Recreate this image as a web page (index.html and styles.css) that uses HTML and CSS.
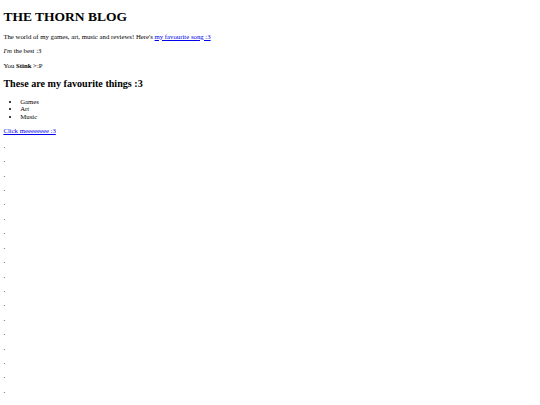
FILE: index.html
```html
<!DOCTYPE html>
<html>
<head>
<meta charset="utf-8">
<title>THE THORN BLOG</title>
<link rel="stylesheet" href="styles.css">
</head>
<body>
<h1>THE THORN BLOG</h1>
<p>The world of my games, art, music and reviews! Here's <a href="#">my favourite song :3</a></p>
<p><em>I'm</em> the best :3</p>
<p>You <strong>Stink</strong> &gt;:P</p>
<h2>These are my favourite things :3</h2>
<ul>
<li>Games</li>
<li>Art</li>
<li>Music</li>
</ul>
<p><a href="#">Click meeeeeeee :3</a></p>
<p>.</p>
<p>.</p>
<p>.</p>
<p>.</p>
<p>.</p>
<p>.</p>
<p>.</p>
<p>.</p>
<p>.</p>
<p>.</p>
<p>.</p>
<p>.</p>
<p>.</p>
<p>.</p>
<p>.</p>
<p>.</p>
<p>.</p>
<p>.</p>
<p>.</p>
<p>.</p>
</body>
</html>
```

FILE: styles.css
```css
html {
  font-size: 6.75px;
}
body {
  margin: 3.375px;
  font-family: "Liberation Serif", "Times New Roman", serif;
  font-size: 6.75px;
  line-height: 7.66px;
  color: #000;
  background: #fff;
}
h1 {
  font-size: 13.5px;
  line-height: 15.5px;
  margin: 6px 0 8px;
}
h2 {
  font-size: 10.125px;
  line-height: 11.6px;
  margin: 8.404px 0;
}
p {
  margin: 6.75px 0;
}
ul {
  margin: 6.75px 0;
  padding-left: 16.875px;
}
a {
  color: #0000ee;
}
```
